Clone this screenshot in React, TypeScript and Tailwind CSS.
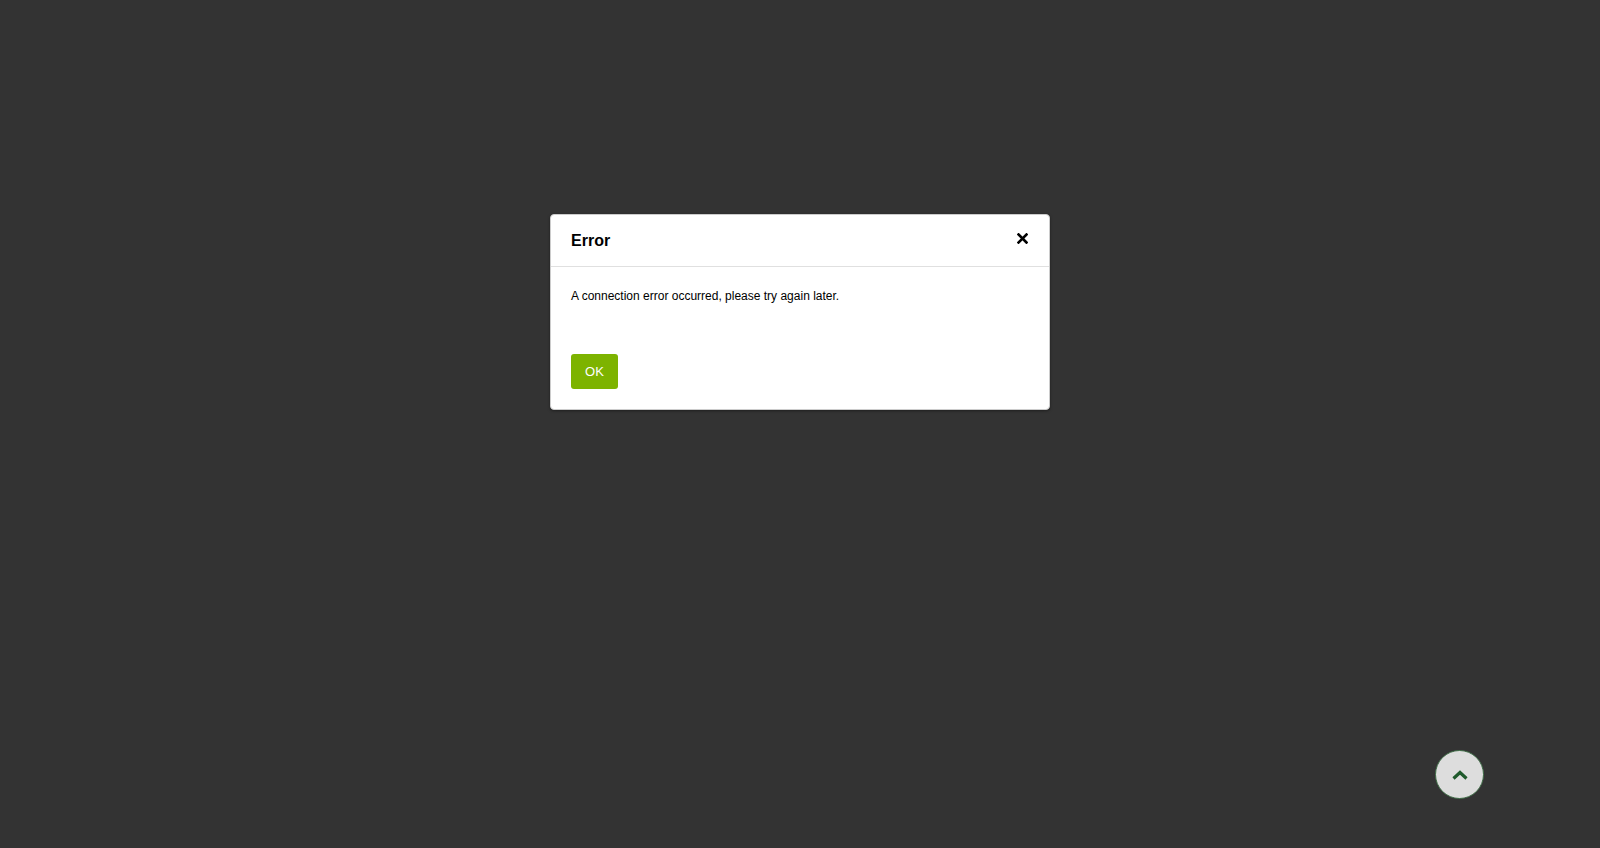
import React from "react";

export default function App() {
  return (
    <div
      className="relative h-[848px] w-full overflow-hidden bg-[#333333]"
      style={{ fontFamily: '"Liberation Sans", Arial, sans-serif' }}
    >
      <div className="mx-auto mt-[214px] w-[500px] rounded-[4px] border border-[#cccccc] bg-white shadow-[0_1px_3px_rgba(0,0,0,0.4)]">
        <div className="flex items-start justify-between border-b border-[#e0e0e0] pl-[20px] pr-[21px] pt-[15px] pb-[14px]">
          <h4 className="text-[16px] font-bold leading-[22px] text-black">Error</h4>
          <button className="mt-[3px] flex h-[11px] w-[11px] items-center justify-center text-black">
            <svg width="11" height="11" viewBox="0 0 11 11">
              <path d="M1.5 1.5 L9.5 9.5 M9.5 1.5 L1.5 9.5" stroke="#000" strokeWidth="2.6" strokeLinecap="square" />
            </svg>
          </button>
        </div>
        <div className="px-[20px] pt-[21px] pb-[20px]">
          <p className="text-[12px] leading-[17px] text-black">A connection error occurred, please try again later.</p>
        </div>
        <div className="px-[20px] pt-[29px] pb-[20px]">
          <button className="h-[35px] w-[47px] rounded-[3px] bg-[#7db300] text-[13px] text-white">OK</button>
        </div>
      </div>
      <button className="absolute left-[1435px] top-[750px] flex h-[49px] w-[49px] items-center justify-center rounded-full border border-[#3d6b45] bg-[#dddddd]">
        <svg width="18" height="12" viewBox="0 0 18 12">
          <path d="M2.5 9.5 L9 3.5 L15.5 9.5" fill="none" stroke="#1f5a2c" strokeWidth="3.2" />
        </svg>
      </button>
    </div>
  );
}
